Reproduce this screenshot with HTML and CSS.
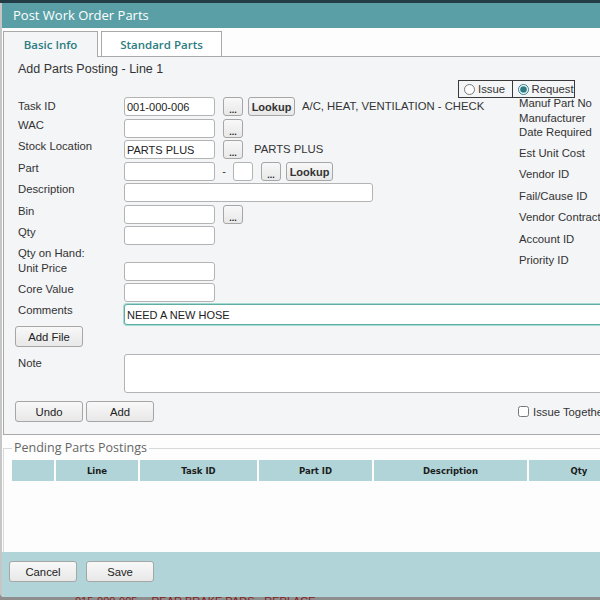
FILE: index.html
```html
<!DOCTYPE html>
<html lang="en">
<head>
<meta charset="utf-8">
<title>Post Work Order Parts</title>
<link rel="stylesheet" href="styles.css">
</head>
<body>
<div class="topstrip"></div>
<div class="dialog">
  <div class="titlebar">Post Work Order Parts</div>
  <div class="dlg-body">
    <div class="tabs">
      <div class="tab active">Basic Info</div>
      <div class="tab">Standard Parts</div>
    </div>
    <div class="panel">
      <div class="heading">Add Parts Posting - Line 1</div>
      <div class="radio-row">
        <div class="radio-box">
          <label class="radio-cell"><input type="radio" name="mode"><span>Issue</span></label>
          <label class="radio-cell divided"><input type="radio" name="mode" checked><span>Request</span></label>
        </div>
      </div>
      <div class="form">
        <div class="row r22 task">
          <div class="lbl">Task ID</div>
          <input class="inp" type="text" value="001-000-006">
          <button class="btn dots">...</button>
          <button class="btn lookup">Lookup</button>
          <span class="note-text">A/C, HEAT, VENTILATION - CHECK</span>
        </div>
        <div class="right-col">
          <div class="rl tight">Manuf Part No</div>
          <div class="rl tight">Manufacturer</div>
          <div class="rl tight">Date Required</div>
          <div class="rl first-wide">Est Unit Cost</div>
          <div class="rl wide">Vendor ID</div>
          <div class="rl wide">Fail/Cause ID</div>
          <div class="rl wide">Vendor Contract</div>
          <div class="rl wide">Account ID</div>
          <div class="rl wide">Priority ID</div>
        </div>
        <div class="row r21">
          <div class="lbl">WAC</div>
          <input class="inp" type="text" value="">
          <button class="btn dots">...</button>
        </div>
        <div class="row r22">
          <div class="lbl">Stock Location</div>
          <input class="inp" type="text" value="PARTS PLUS">
          <button class="btn dots">...</button>
          <span class="loc-text">PARTS PLUS</span>
        </div>
        <div class="row r21">
          <div class="lbl">Part</div>
          <input class="inp" type="text" value="">
          <span class="dash">-</span>
          <input class="inp tiny" type="text" value="">
          <button class="btn dots dots-part">...</button>
          <button class="btn lookup">Lookup</button>
        </div>
        <div class="row r22">
          <div class="lbl">Description</div>
          <input class="inp desc" type="text" value="">
        </div>
        <div class="row r21">
          <div class="lbl">Bin</div>
          <input class="inp" type="text" value="">
          <button class="btn dots">...</button>
        </div>
        <div class="row r21">
          <div class="lbl">Qty</div>
          <input class="inp" type="text" value="">
        </div>
        <div class="row r15">
          <div class="lbl">Qty on Hand:</div>
        </div>
        <div class="row r21">
          <div class="lbl">Unit Price</div>
          <input class="inp" type="text" value="">
        </div>
        <div class="row r21 span">
          <div class="lbl">Core Value</div>
          <input class="inp" type="text" value="">
        </div>
        <div class="row r22 span">
          <div class="lbl">Comments</div>
          <input class="inp wide-inp focus" type="text" value="NEED A NEW HOSE">
        </div>
        <div class="row r28 span">
          <button class="btn plain">Add File</button>
        </div>
        <div class="row r47 span">
          <div class="lbl lbl-note">Note</div>
          <textarea class="inp wide-inp area"></textarea>
        </div>
        <div class="row r21 actions">
          <button class="btn plain">Undo</button>
          <button class="btn plain">Add</button>
        </div>
        <label class="together"><input type="checkbox"><span>Issue Together</span></label>
      </div>
    </div>
    <fieldset class="pending">
      <legend>Pending Parts Postings</legend>
      <div class="grid-head">
        <div class="hcell"></div>
        <div class="hcell">Line</div>
        <div class="hcell">Task ID</div>
        <div class="hcell">Part ID</div>
        <div class="hcell">Description</div>
        <div class="hcell">Qty</div>
      </div>
    </fieldset>
  </div>
  <div class="footer">
    <button class="btn plain">Cancel</button>
    <button class="btn plain save">Save</button>
  </div>
</div>
<div class="behind"><span>015-000-005</span><span class="behind-desc">REAR BRAKE PADS - REPLACE</span></div>
</body>
</html>
```
FILE: styles.css
```css
* { box-sizing: border-box; }
html, body {
  margin: 0;
  padding: 0;
  width: 600px;
  height: 600px;
  overflow: hidden;
  background: #8e8e8e;
  font-family: "Liberation Sans", Arial, sans-serif;
  color: #333;
}
.topstrip { height: 3px; background: #223d45; }
.dialog {
  width: 720px;
  border-left: 2px solid #c6c6c6;
  background: #fdfdfd;
  border-bottom-left-radius: 4px;
  overflow: hidden;
}
.titlebar {
  height: 25px;
  background: #5a9fa6;
  color: #fff;
  font-family: "Open Sans", sans-serif;
  font-size: 13px;
  line-height: 25px;
  padding-left: 11px;
}
.dlg-body { height: 524px; overflow: hidden; background: #fdfdfd; }
.tabs {
  display: flex;
  align-items: flex-start;
  gap: 3px;
  padding: 3px 0 0 1px;
  margin-bottom: -1px;
  position: relative;
  z-index: 1;
}
.tab {
  height: 25px;
  width: 121px;
  border: 1px solid #a9a9a9;
  border-bottom: none;
  background: #fff;
  color: #2b7b81;
  font-family: "Open Sans", sans-serif;
  font-weight: 600;
  font-size: 11.5px;
  display: flex;
  align-items: center;
  justify-content: center;
}
.tab.active { width: 95px; height: 26px; background: #f4f5f7; }
.panel {
  margin-left: 1px;
  width: 700px;
  height: 379px;
  border: 1px solid #a9a9a9;
  background: #f4f5f7;
  padding: 4px 0 0 14px;
}
.heading { font-size: 12.5px; line-height: 16px; height: 16px; color: #333; }
.radio-row { margin-top: 3px; margin-left: 440px; height: 18px; }
.radio-box {
  display: inline-flex;
  height: 18px;
  width: 117px;
  border: 1px solid #3a3a3a;
  font-size: 11.3px;
}
.radio-cell { display: flex; align-items: center; width: 53px; }
.radio-cell.divided { border-left: 1px solid #3a3a3a; width: 63px; }
.radio-cell input {
  width: 11px;
  height: 11px;
  margin: 0 3px 0 5px;
  accent-color: #2e7d86;
}
.form {
  margin-top: -1px;
  display: grid;
  grid-template-columns: 501px 1fr;
}
.row { grid-column: 1; display: flex; align-items: flex-start; font-size: 11.3px; }
.row.span { grid-column: 1 / -1; }
.r15 { height: 15px; }
.r21 { height: 21px; }
.r22 { height: 22px; }
.r28 { height: 28px; }
.r47 { height: 47px; }
.lbl { width: 106px; flex: none; line-height: 14px; margin-top: -1px; color: #333; }
.task .lbl { line-height: 19px; margin-top: 0; }
.lbl-note { margin-top: 2px; }
.inp {
  width: 91px;
  height: 19px;
  flex: none;
  border: 1px solid #b3b3b3;
  border-radius: 3px;
  background: #fff;
  font-family: "Liberation Sans", Arial, sans-serif;
  font-size: 11px;
  color: #222;
  padding: 0 2px;
  margin: 0;
}
.inp.tiny { width: 20px; }
.inp.desc { width: 249px; }
.inp.wide-inp { width: 520px; }
.inp.focus {
  height: 21px;
  border: 1px solid #5eaea6;
  box-shadow: 0 0 0 1px #a6dad3;
}
.inp.area { height: 39px; resize: none; }
.btn {
  border: 1px solid #a6a6a6;
  border-radius: 3px;
  background: linear-gradient(#f8f8f8, #e8e8e8);
  color: #222;
  font-family: "Liberation Sans", Arial, sans-serif;
  padding: 0;
  margin: 0;
  flex: none;
}
.dots { width: 20px; height: 19px; margin-left: 8px; font-size: 9px; font-weight: bold; line-height: 19px; padding-top: 3px; }
.dots-part { margin-left: 8px; }
.lookup { width: 47px; height: 19px; margin-left: 5px; font-size: 11px; font-weight: bold; color: #333; }
.note-text { margin-left: 7px; font-size: 11.3px; line-height: 19px; color: #333; }
.loc-text { margin-left: 11px; font-size: 11.3px; line-height: 19px; color: #333; }
.dash { width: 18px; text-align: center; line-height: 19px; font-size: 11px; }
.plain { width: 68px; height: 21px; font-size: 11.3px; }
.r28 .plain { margin-left: -3px; }
.actions .plain { margin-right: 3px; }
.actions .plain:first-child { margin-left: -3px; }
.right-col { grid-column: 2; grid-row: 1 / span 9; margin-top: -1px; font-size: 11.3px; color: #333; }
.rl { white-space: nowrap; }
.rl.tight { line-height: 14.5px; }
.rl.first-wide { margin-top: 3px; line-height: 21.5px; }
.rl.wide { line-height: 21.5px; }
.together {
  grid-column: 2;
  display: flex;
  align-items: center;
  height: 21px;
  margin-left: -1px;
  font-size: 11.3px;
  white-space: nowrap;
  color: #333;
}
.together input { width: 11px; height: 11px; margin: 0 4px 0 0; }
.pending {
  margin: 5px 0 0 1px;
  padding: 0 0 0 8px;
  height: 140px;
  width: 700px;
  border: 1px solid #d8d8d8;
}
.pending legend {
  padding: 0 2px;
  font-family: "Open Sans", sans-serif;
  font-size: 12.5px;
  line-height: 16px;
  color: #666;
}
.grid-head {
  margin-top: 4px;
  display: grid;
  grid-template-columns: 42px 82px 117px 113px 153px 100px;
  gap: 2px;
}
.hcell {
  height: 21px;
  background: #b1d4d8;
  font-family: "DejaVu Sans", Verdana, sans-serif;
  font-weight: bold;
  font-size: 8.5px;
  color: #1c1c1c;
  display: flex;
  align-items: center;
  justify-content: center;
}
.footer {
  height: 45px;
  background: #b1d4d8;
  padding: 9px 0 0 7px;
  display: flex;
  align-items: flex-start;
}
.footer .save { margin-left: 9px; }
.behind {
  height: 3px;
  overflow: hidden;
  padding-left: 75px;
  font-size: 11px;
  line-height: 8px;
  color: #8a1c1c;
  white-space: nowrap;
}
.behind-desc { margin-left: 14px; }
```
